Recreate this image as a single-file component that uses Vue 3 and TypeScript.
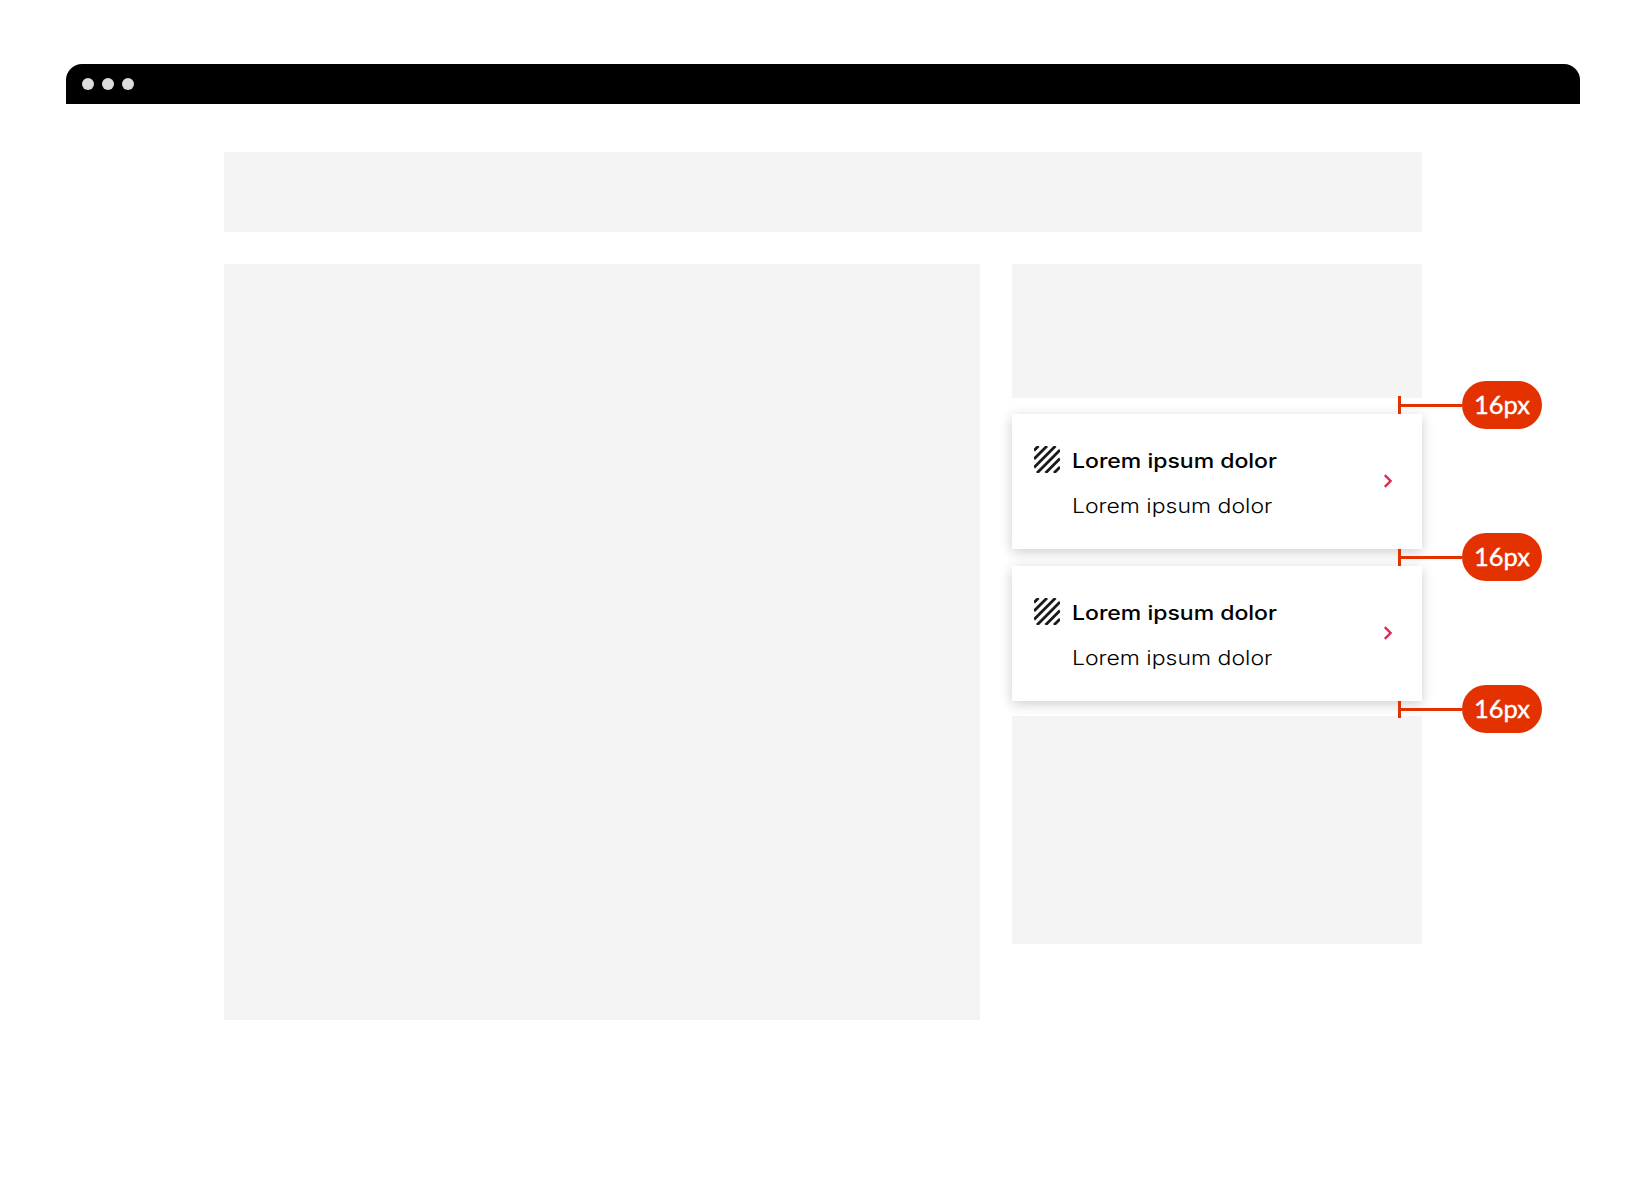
<script setup lang="ts">
const cards = [
  { title: 'Lorem ipsum dolor', text: 'Lorem ipsum dolor' },
  { title: 'Lorem ipsum dolor', text: 'Lorem ipsum dolor' },
]

// measured spacing between the stacked blocks, and where each marker sits in it
const gaps = [
  { height: 16, top: -17, tick: 18 },
  { height: 17, top: -16, tick: 17 },
  { height: 15, top: -16, tick: 17 },
]
</script>

<template>
  <div class="page">
    <div class="window-bar">
      <span class="dot"></span>
      <span class="dot"></span>
      <span class="dot"></span>
    </div>

    <div class="content">
      <div class="block header-block"></div>

      <div class="columns">
        <div class="block main-block"></div>

        <div class="side">
          <div class="block side-top"></div>

          <template v-for="(card, i) in cards" :key="i">
            <div class="gap" :style="{ height: gaps[i].height + 'px' }">
              <div class="measure" :style="{ top: gaps[i].top + 'px' }">
                <span class="tick" :style="{ height: gaps[i].tick + 'px' }"></span>
                <span class="line"></span>
                <span class="badge">16px</span>
              </div>
            </div>

            <div class="card">
              <div class="card-body">
                <div class="card-row">
                  <svg class="stripes" width="26" height="27" viewBox="0 0 26 27">
                    <g stroke="#1a1a1a" stroke-width="2.8" fill="none">
                      <path d="M0 4.5 L4.5 0" />
                      <path d="M0 13 L13 0" />
                      <path d="M0 21.5 L21.5 0" />
                      <path d="M3 27 L26 4" />
                      <path d="M11.5 27 L26 12.5" />
                      <path d="M20 27 L26 21" />
                    </g>
                  </svg>
                  <span class="title">{{ card.title }}</span>
                </div>
                <div class="sub">{{ card.text }}</div>
              </div>
              <svg class="chevron" width="10" height="14" viewBox="0 0 10 14">
                <path d="M1.8 1.2 L7.6 7 L1.8 12.8" fill="none" stroke="#de2a55" stroke-width="2.4" />
              </svg>
            </div>
          </template>

          <div class="gap" :style="{ height: gaps[2].height + 'px' }">
            <div class="measure" :style="{ top: gaps[2].top + 'px' }">
              <span class="tick" :style="{ height: gaps[2].tick + 'px' }"></span>
              <span class="line"></span>
              <span class="badge">16px</span>
            </div>
          </div>

          <div class="block side-bottom"></div>
        </div>
      </div>
    </div>
  </div>
</template>

<style>
html,
body {
  background: #fff;
}
</style>

<style scoped>
.page {
  width: 1646px;
  height: 1178px;
  padding: 64px 66px 0;
  box-sizing: border-box;
  font-family: "Liberation Sans", Arial, sans-serif;
  overflow: hidden;
}

.window-bar {
  display: flex;
  align-items: center;
  gap: 8px;
  height: 40px;
  padding-left: 16px;
  background: #000;
  border-radius: 16px 16px 0 0;
}

.dot {
  width: 12px;
  height: 12px;
  border-radius: 50%;
  background: #dcdcdc;
}

.content {
  display: flex;
  flex-direction: column;
  gap: 32px;
  padding: 48px 158px 0;
}

.block {
  background: #f4f4f4;
}

.header-block {
  height: 80px;
}

.columns {
  display: flex;
  gap: 32px;
  align-items: flex-start;
}

.main-block {
  width: 756px;
  height: 756px;
}

.side {
  display: flex;
  flex-direction: column;
  width: 410px;
}

.side-top {
  height: 134px;
}

.side-bottom {
  height: 228px;
}

.gap {
  position: relative;
}

.measure {
  position: absolute;
  left: 386px;
  display: flex;
  align-items: center;
  height: 48px;
}

.tick {
  width: 3px;
  background: #e33100;
}

.line {
  width: 61px;
  height: 3px;
  background: #e33100;
}

.badge {
  width: 80px;
  height: 48px;
  border-radius: 24px;
  background: #e33100;
  color: #fff;
  font-family: Lato, sans-serif;
  font-size: 25.5px;
  font-weight: 400;
  -webkit-text-stroke: 0.4px #fff;
  line-height: 46px;
  text-align: center;
}

.card {
  display: flex;
  align-items: center;
  justify-content: space-between;
  height: 135px;
  padding: 0 29px 0 22px;
  box-sizing: border-box;
  background: #fff;
  box-shadow: 0 3px 12px rgba(0, 0, 0, 0.2);
}

.card-body {
  align-self: flex-start;
  display: flex;
  flex-direction: column;
  gap: 21px;
  padding-top: 32px;
}

.card-row {
  display: flex;
  align-items: flex-start;
  gap: 12px;
}

.stripes {
  flex: none;
}

.title,
.sub {
  color: #000;
  font-family: Inter, sans-serif;
  font-size: 20px;
  line-height: 24px;
  white-space: nowrap;
  transform-origin: left center;
}

.title {
  margin-top: 3px;
  font-weight: 500;
  transform: scaleX(1.15);
}

.sub {
  margin-left: 38px;
  width: max-content;
  font-weight: 300;
  transform: scaleX(1.15);
}

.chevron {
  flex: none;
  margin-top: -1px;
}
</style>
